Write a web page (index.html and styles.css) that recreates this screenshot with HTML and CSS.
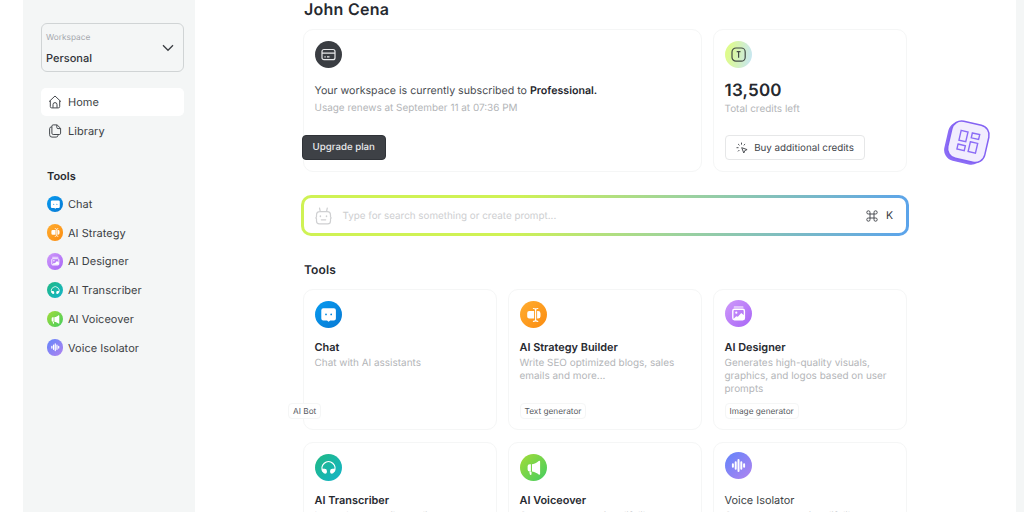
FILE: index.html
```html
<!DOCTYPE html>
<html lang="en">
<head>
<meta charset="utf-8">
<title>Workspace</title>
<link rel="stylesheet" href="styles.css">
</head>
<body>
<svg class="sprite" aria-hidden="true">
  <symbol id="i-chat" viewBox="0 0 27 27"><path fill="#fff" fill-rule="evenodd" d="M8.300 7.200h10.600a2 2 0 0 1 2 2v8.300a2 2 0 0 1-2 2h-3.700l-1.600 1.200-1.600-1.200H8.300a2 2 0 0 1-2-2V9.200a2 2 0 0 1 2-2zM11 12.500a.9.9 0 1 0 0 1.800.9.9 0 0 0 0-1.800zm5.200 0a.9.9 0 1 0 0 1.800.9.9 0 0 0 0-1.800z"/></symbol>
  <symbol id="i-strategy" viewBox="0 0 27 27"><path fill="#fff" d="M9.200 10h4.900v7.600H9.200a2 2 0 0 1-2-2v-3.600a2 2 0 0 1 2-2zM17.100 10h1a2.400 2.400 0 0 1 2.400 2.400v2.800a2.400 2.400 0 0 1-2.400 2.400h-1z"/><path fill="none" stroke="#fff" stroke-width="1.200" stroke-linecap="round" d="M13.400 7.500q2.200 0 2.200 1.300v10.200q0 1.300-2.200 1.300M17.800 7.500q-2.200 0-2.200 1.300M15.600 19q0 1.300 2.200 1.300"/></symbol>
  <symbol id="i-designer" viewBox="0 0 27 27"><path fill="none" stroke="#fff" stroke-width="1.200" stroke-linecap="round" d="M9.300 7h8.600"/><rect x="7.800" y="9.300" width="11.600" height="10.400" rx="1.600" fill="none" stroke="#fff" stroke-width="1.400"/><path fill="#fff" d="m8 19.400 3.200-3.200 1.700.5 3.300-3.700 3.200 2.400v4z"/><circle cx="11.300" cy="12.700" r="1.100" fill="#fff"/></symbol>
  <symbol id="i-transcriber" viewBox="0 0 27 27"><path fill="none" stroke="#fff" stroke-width="1.300" d="M8 17.600A6.500 6.500 0 1 1 19 17.600"/><path fill="#fff" d="M7 14.800h2.600a2.300 2.300 0 0 1 2.300 2.300v1a1.700 1.700 0 0 1-1.700 1.700c-2 0-3.200-2.400-3.200-5zM20 14.800h-2.600a2.300 2.300 0 0 0-2.300 2.300v1a1.700 1.700 0 0 0 1.700 1.700c2 0 3.200-2.400 3.200-5z"/></symbol>
  <symbol id="i-voiceover" viewBox="0 0 27 27"><path fill="#fff" d="M12 10.200c3-.4 5.200-1.700 6.700-3.200.6-.5 1.400-.2 1.400.6v12.300c0 .8-.8 1.100-1.400.6-1.500-1.500-3.700-2.700-6.700-3.100zM10.900 10.200v7.200H9.600a2 2 0 0 1-2-2v-3.200a2 2 0 0 1 2-2zM9.300 17.800h2.200v2.300q0 .9-.9.900-.6 0-.8-.7z"/></symbol>
  <symbol id="i-isolator" viewBox="0 0 27 27"><path fill="none" stroke="#fff" stroke-width="2" stroke-linecap="round" d="M7.900 12.200v2.600M10.700 10.200v6.600M13.500 8v11M16.300 10.200v6.600M19.100 12.200v2.600"/></symbol>
</svg>

<div class="app">
  <aside class="sidebar">
    <button class="workspace">
      <span class="workspace-text"><span class="workspace-label">Workspace</span><span class="workspace-name">Personal</span></span>
      <svg class="chevron" viewBox="0 0 12 8"><path d="m1 1.300 5 5 5-5"/></svg>
    </button>
    <nav class="nav">
      <a class="nav-item active"><svg class="nav-icon" viewBox="0 0 14 14"><path d="M1 6.700 7 1l6 5.700M2.300 5.800v5.700q0 1.400 1.400 1.400h6.600q1.400 0 1.400-1.400V5.800M5 12.700V9.600a2 2 0 0 1 4 0v3.100"/></svg>Home</a>
      <a class="nav-item"><svg class="nav-icon" viewBox="0 0 14 14"><path d="M5.200.9h3.900L12.600 4.300v4.900q0 1.300-1.300 1.300H5.200q-1.300 0-1.300-1.300V2.200Q3.900.9 5.200.9zM8.800 1v2.400q0 1.200 1.200 1.200h2.500M3.900 2.800q-2.300.1-2.300 1.900v6q0 2.400 2.400 2.400h4.100q1.700 0 1.900-1.700v-.9"/></svg>Library</a>
    </nav>
    <h3 class="side-title">Tools</h3>
    <nav class="nav">
      <a class="nav-item tool"><svg class="dot chat"><use href="#i-chat"/></svg>Chat</a>
      <a class="nav-item tool"><svg class="dot strategy"><use href="#i-strategy"/></svg>AI Strategy</a>
      <a class="nav-item tool"><svg class="dot designer"><use href="#i-designer"/></svg>AI Designer</a>
      <a class="nav-item tool"><svg class="dot transcriber"><use href="#i-transcriber"/></svg>AI Transcriber</a>
      <a class="nav-item tool"><svg class="dot voiceover"><use href="#i-voiceover"/></svg>AI Voiceover</a>
      <a class="nav-item tool"><svg class="dot isolator"><use href="#i-isolator"/></svg>Voice Isolator</a>
    </nav>
  </aside>

  <main class="main">
    <h1 class="user">John Cena</h1>
    <div class="summary">
      <section class="card plan">
        <svg class="badge dark" viewBox="0 0 27 27"><rect x="7" y="8.500" width="13" height="10.200" rx="2"/><path d="M7 12.200h13M9.400 15.800h1.300M12 15.800h2.500"/></svg>
        <p class="plan-text">Your workspace is currently subscribed to <b>Professional.</b></p>
        <p class="muted renew">Usage renews at September 11 at 07:36 PM</p>
        <button class="upgrade">Upgrade plan</button>
      </section>
      <section class="card credits">
        <svg class="badge lime" viewBox="0 0 27 27"><rect x="7" y="7" width="13.200" height="13.200" rx="4"/><path d="M11.700 10.700h3.800M13.600 10.700v6"/></svg>
        <p class="amount">13,500</p>
        <p class="muted total">Total credits left</p>
        <button class="buy"><svg class="spark" viewBox="0 0 12 12"><path d="M5.500.6v2M2.100 2 3.500 3.400M.5 5.700h2M2 9.400 3.400 8M9.100 2 7.700 3.400M5.700 5.700l5.400 1.900-2.300 1-1 2.400z"/></svg>Buy additional credits</button>
      </section>
    </div>

    <div class="search">
      <svg class="bot" viewBox="0 0 17 18"><path d="M4.500 1 5.300 4.700M12.300 1l-.8 3.700M4.700 4.700h7.600q3.200 0 3.200 3.600v1.600l.6 1-.6 1v2q0 2.900-2.800 2.900H4.300q-2.800 0-2.800-2.900v-2l-.6-1 .6-1V8.300q0-3.600 3.200-3.600zM6.300 12.800h4.400"/><path d="M5.400 8.900v.5M11.500 8.900v.5" class="eyes"/></svg>
      <span class="placeholder">Type for search something or create prompt...</span>
      <svg class="command" viewBox="0 0 12 12"><path d="M4 4h4v4H4zM4 4H2.600A1.600 1.600 0 1 1 4 2.600zM8 4V2.600A1.600 1.600 0 1 1 9.400 4zM8 8h1.400A1.600 1.600 0 1 1 8 9.400zM4 8v1.400A1.600 1.600 0 1 1 2.600 8z"/></svg>
      <kbd class="key">K</kbd>
    </div>

    <h2 class="section-title">Tools</h2>
    <div class="tools">
      <article class="card tool-card"><svg class="badge chat"><use href="#i-chat"/></svg><h4>Chat</h4><p class="muted desc">Chat with AI assistants</p><span class="tag tag-out">AI Bot</span></article>
      <article class="card tool-card"><svg class="badge strategy"><use href="#i-strategy"/></svg><h4>AI Strategy Builder</h4><p class="muted desc">Write SEO optimized blogs, sales<br>emails and more...</p><span class="tag">Text generator</span></article>
      <article class="card tool-card raised"><svg class="badge designer"><use href="#i-designer"/></svg><h4>AI Designer</h4><p class="muted desc">Generates high-quality visuals,<br>graphics, and logos based on user<br>prompts</p><span class="tag">Image generator</span></article>
      <article class="card tool-card"><svg class="badge transcriber"><use href="#i-transcriber"/></svg><h4>AI Transcriber</h4><p class="muted desc">Instantly transcribe audio content</p></article>
      <article class="card tool-card"><svg class="badge voiceover"><use href="#i-voiceover"/></svg><h4>AI Voiceover</h4><p class="muted desc">Convert your text into lifelike</p></article>
      <article class="card tool-card plain"><svg class="badge isolator"><use href="#i-isolator"/></svg><h4>Voice Isolator</h4><p class="muted desc">Convert your text into lifelike</p></article>
    </div>
  </main>
  <div class="scroll-edge"></div>

  <svg class="widget" viewBox="0 0 50 50">
    <g transform="rotate(13 25 25)">
      <rect x="4" y="6" width="38.500" height="39.500" rx="11" fill="#8b6cf6"/>
      <rect x="7" y="4.500" width="38" height="38" rx="10" fill="#f1edfe" stroke="#8463f3" stroke-width="1.500"/>
      <path fill="none" stroke="#8b6cf6" stroke-width="1.400" d="M16.500 14h7v10h-7zM28 14h7.500v5H28zM16.500 28h7.500v5h-7.500zM28 23h7.500v10H28z"/>
    </g>
  </svg>
</div>
</body>
</html>
```
FILE: styles.css
```css
* { box-sizing: border-box; }
body { margin: 0; width: 1024px; height: 512px; overflow: hidden; background: #fff; color: #26292f; font-family: Inter, "Liberation Sans", sans-serif; text-rendering: geometricPrecision; }
h1, h2, h3, h4, p { margin: 0; font-weight: 600; }
p { font-weight: 400; }
button { font-family: inherit; margin: 0; text-rendering: inherit; }
.sprite { position: absolute; width: 0; height: 0; }
.app { display: flex; height: 512px; overflow: hidden; background: #fff; }

.sidebar { flex: none; width: 172.500px; margin-left: 22.500px; padding: 23px 11px 0 18px; background: #f4f6f6; }
.workspace { display: flex; align-items: center; justify-content: space-between; width: 143.500px; height: 49px; padding: 0 9px 0 4.500px; border: 1px solid #d0d4d5; border-radius: 6px; background: transparent; text-align: left; }
.workspace-text { display: flex; flex-direction: column; padding-top: 3px; }
.workspace-label { font-size: 8.300px; line-height: 18px; color: #a5a8ae; }
.workspace-name { font-size: 11px; line-height: 22px; font-weight: 500; color: #303238; }
.chevron { width: 12px; height: 8px; fill: none; stroke: #3a3d42; stroke-width: 1.300; }
.nav { display: flex; flex-direction: column; gap: 1.250px; }
.workspace + .nav { margin-top: 16px; }
.nav-item { display: flex; align-items: center; height: 27.500px; width: 143px; padding-left: 7.500px; gap: 6px; border-radius: 5px; font-size: 11px; letter-spacing: .03px; color: #3c3f45; }
.nav-item.active { background: #fff; }
.nav-icon { width: 14px; height: 14px; fill: none; stroke: #45494e; stroke-width: 1; }
.side-title { margin: 21.500px 0 4.250px 6.500px; font-size: 11px; line-height: 20px; }
.tool { padding-left: 6px; gap: 5px; }
.dot { width: 16.500px; height: 16.500px; border-radius: 50%; }

.chat { background: linear-gradient(135deg, #079bf0, #0879d3); }
.strategy { background: linear-gradient(135deg, #ffad31, #fb8c10); }
.designer { background: linear-gradient(135deg, #cf9afa, #a865f6); }
.transcriber { background: linear-gradient(135deg, #20b982, #14b4cb); }
.voiceover { background: linear-gradient(135deg, #a4dc38, #43cd60); }
.isolator { background: linear-gradient(135deg, #6285fb, #b183ef); }

.main { flex: none; width: 604px; margin-left: 108px; }
.user { padding-left: 1px; font-size: 16px; line-height: 18px; letter-spacing: .25px; }
.summary { display: grid; grid-template-columns: 399px 194px; gap: 11px; margin-top: 11px; }
.card { display: flex; flex-direction: column; align-items: flex-start; padding: 10.500px; border: 1px solid #f5f6f6; border-radius: 10px; background: #fff; }
.summary .card { height: 143px; }
.badge { flex: none; width: 27px; height: 27px; border-radius: 50%; }
.dark { background: #3a3d42; fill: none; stroke: #e9eaec; stroke-width: 1.200; }
.lime { background: linear-gradient(100deg, #defb8d 15%, #c7e6f3 95%); fill: none; stroke: #434c45; stroke-width: 1.200; }
.muted { color: #b3b5b8; font-size: 9.950px; }
.plan-text { margin-top: 14px; font-size: 10.650px; line-height: 18px; color: #484b50; white-space: nowrap; }
.plan-text b { color: #24262c; font-weight: 600; }
.renew { line-height: 17px; }
.upgrade { width: 83.500px; height: 25.500px; margin: 18px 0 0 -12.500px; padding: 1px 0 0; border: 1px solid #303338; border-radius: 4px; background: #3e4146; color: #e9eaec; font-size: 9.700px; font-weight: 500; }
.amount { margin-top: 13.500px; font-size: 17px; line-height: 20px; font-weight: 600; letter-spacing: .2px; }
.total { line-height: 16px; }
.buy { display: flex; align-items: center; justify-content: center; gap: 6.500px; width: 140.500px; height: 25.500px; margin-top: 17.500px; padding: 2px 0 0; border: 1px solid #e6e7e8; border-radius: 4px; background: #fff; color: #42454b; font-size: 9.800px; }
.spark { width: 12px; height: 12px; fill: none; stroke: #4d5055; stroke-width: 1; }

.search { display: flex; align-items: center; width: 608px; height: 41px; margin: 23px 0 0 -2px; padding: 0 13px 0 10.500px; border: 3px solid transparent; border-radius: 10px; background: linear-gradient(#fff, #fff) padding-box, linear-gradient(100deg, #cff254 0%, #cff254 35%, #9dd39c 62%, #5aa3ec 100%) border-box; }
.bot { width: 17px; height: 18px; fill: none; stroke: #cfd0d2; stroke-width: 1.200; stroke-linecap: round; }
.eyes { stroke-width: 1.500; }
.placeholder { flex: 1; margin-left: 11px; font-size: 9.850px; color: #cdced0; }
.command { width: 12px; height: 12px; fill: none; stroke: #4c4f54; stroke-width: 1; }
.key { margin-left: 8px; font: 400 10.500px Inter, sans-serif; color: #33363b; }

.section-title { margin: 24px 0 10px 1px; font-size: 12px; line-height: 19px; letter-spacing: .1px; }
.tools { display: grid; grid-template-columns: repeat(3, 194px); gap: 12px 11px; }
.tool-card { height: 141px; }
.tool-card h4 { margin-top: 10.500px; font-size: 10.900px; line-height: 18px; }
.desc { line-height: 13px; margin-top: 1px; white-space: nowrap; }
.tag { margin-top: auto; height: 16px; padding: 0 4px; border: 1px solid #f5f6f6; border-radius: 4px; background: #fff; color: #56595e; font-size: 8.250px; line-height: 14px; white-space: nowrap; }
.tag-out { margin-left: -26.500px; }
.raised { padding-top: 10px; }
.plain { padding-top: 8.500px; }
.plain h4 { margin-top: 12.500px; font-weight: 400; color: #3c3f45; }

.scroll-edge { flex: none; width: 8px; margin-left: auto; background: #f4f6f6; }
.widget { position: absolute; left: 942px; top: 118px; width: 50px; height: 50px; }
```
